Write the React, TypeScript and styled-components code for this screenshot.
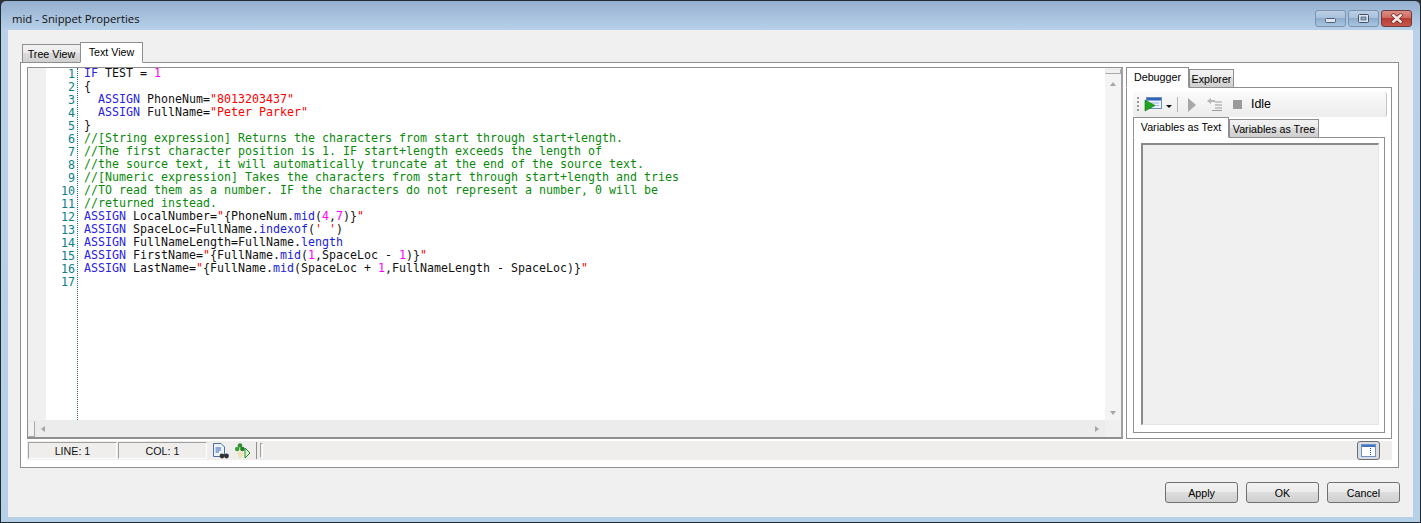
import React from 'react';
import styled, { createGlobalStyle } from 'styled-components';

const GlobalStyle = createGlobalStyle`
  html, body {
    margin: 0;
    padding: 0;
    background: #2b2f33;
    overflow: hidden;
  }
  * {
    box-sizing: border-box;
  }
`;

const WindowFrame = styled.div`
  width: 1421px;
  height: 523px;
  display: flex;
  flex-direction: column;
  border: 1px solid #1f2a33;
  border-radius: 6px 6px 0 0;
  background: linear-gradient(to bottom, #96b0cf 0, #a6bfdb 14px, #b9d2ea 30px, #b6d0e8 100%);
  padding: 0 7px 7px 7px;
  font-family: 'Liberation Sans', Arial, sans-serif;
  font-size: 10.7px;
  color: #000;
`;

const TitleBar = styled.div`
  height: 29px;
  display: flex;
  align-items: flex-start;
  justify-content: space-between;
  flex-shrink: 0;
`;

const Title = styled.div`
  font-family: 'Open Sans', sans-serif;
  font-size: 11.3px;
  line-height: 16px;
  margin: 10px 0 0 4px;
  color: #111;
`;

const CaptionGroup = styled.div`
  display: flex;
  gap: 2px;
  margin: 9px 1px 0 0;
`;

const CaptionButton = styled.div<{ $close?: boolean }>`
  width: 31px;
  height: 17px;
  border: 1px solid ${(p) => (p.$close ? '#6e3a3a' : '#7d93ad')};
  border-radius: 3px;
  display: flex;
  align-items: center;
  justify-content: center;
  background: ${(p) =>
    p.$close
      ? 'linear-gradient(to bottom, #dc8f85 0, #cf6a60 45%, #b93d32 50%, #c8574d 100%)'
      : 'linear-gradient(to bottom, #bcd0e6 0, #a9c1dc 45%, #8faccd 50%, #a9c6e2 100%)'};
`;

const Client = styled.div`
  flex: 1;
  background: #f0f0f0;
  display: flex;
  flex-direction: column;
  padding: 12px 14px 14px 12px;
`;

const TabRow = styled.div<{ $inset: number }>`
  display: flex;
  align-items: flex-end;
  padding-left: ${(p) => p.$inset}px;
  flex-shrink: 0;
  height: 21px;
  position: relative;
  z-index: 1;
  margin-bottom: -1px;
`;

const Tab = styled.div<{ $active?: boolean; $w: number }>`
  width: ${(p) => p.$w}px;
  height: ${(p) => (p.$active ? 21 : 19)}px;
  border: 1px solid #8f8f8f;
  border-bottom: ${(p) => (p.$active ? '1px solid #fff' : '1px solid #8f8f8f')};
  margin-left: ${(p) => (p.$active ? -1 : 0)}px;
  background: ${(p) =>
    p.$active ? '#fff' : 'linear-gradient(to bottom, #f2f2f2 0, #ebebeb 45%, #dcdcdc 50%, #cfcfcf 100%)'};
  display: flex;
  align-items: ${(p) => (p.$active ? 'flex-start' : 'center')};
  justify-content: center;
  padding-top: ${(p) => (p.$active ? 3 : 1)}px;
  line-height: 13px;
  white-space: nowrap;
  position: relative;
  z-index: ${(p) => (p.$active ? 2 : 1)};
`;

const MainPanel = styled.div`
  height: 406px;
  border: 1px solid #8f8f8f;
  background: #fff;
  display: flex;
  flex-direction: column;
  padding: 4px 5px 6px 6px;
`;

const SplitRow = styled.div`
  height: 372px;
  display: flex;
`;

const EditorFrame = styled.div`
  width: 1096px;
  border: 1px solid #8f8f8f;
  border-bottom: 2px solid #8f8f8f;
  border-right: 2px solid #a0a0a0;
  display: grid;
  grid-template-columns: 1fr 16px;
  grid-template-rows: 1fr 17px;
  background: #fff;
`;

const CodeArea = styled.div`
  display: flex;
`;

const Margin = styled.div`
  width: 18px;
  background: #f0f0f0;
  flex-shrink: 0;
`;

const LineNumbers = styled.div`
  width: 32px;
  flex-shrink: 0;
  border-right: 1px dotted #1f6f6f;
  font-family: 'DejaVu Sans Mono', monospace;
  font-size: 11.64px;
  line-height: 13px;
  color: #0a7f86;
  text-align: right;
  padding-right: 2px;
`;

const CodeText = styled.pre`
  margin: -1px 0 0 0;
  padding: 0 0 0 6px;
  font-family: 'DejaVu Sans Mono', monospace;
  font-size: 11.64px;
  line-height: 13px;
  color: #111;
`;

const Keyword = styled.span`
  color: #2a22e6;
`;
const Str = styled.span`
  color: #f00;
`;
const Num = styled.span`
  color: #f0f;
`;
const Comment = styled.span`
  color: #0a8a0a;
`;
const Method = styled.span`
  color: #1a22d8;
`;

const ScrollV = styled.div`
  background: #f4f4f4;
  display: flex;
  flex-direction: column;
  align-items: center;
`;

const ScrollH = styled.div`
  background: #ececec;
  display: flex;
  align-items: center;
  padding-right: 6px;
`;

const ScrollCorner = styled.div`
  background: #f0f0f0;
`;

const SplitGrip = styled.div<{ $vertical?: boolean }>`
  background: #f2f2f2;
  border: 1px solid #a8a8a8;
  border-top-color: #e8e8e8;
  border-left-color: #e8e8e8;
  flex-shrink: 0;
  ${(p) => (p.$vertical ? 'width: 16px; height: 5px; margin-top: 1px;' : 'width: 7px; height: 16px; margin-right: 6px;')}
`;

const Arrow = styled.div<{ $dir: 'up' | 'down' | 'left' | 'right' }>`
  width: 0;
  height: 0;
  border-style: solid;
  ${(p) =>
    p.$dir === 'up'
      ? 'border-width: 0 3.5px 4px 3.5px; border-color: transparent transparent #a6a6a6 transparent; margin-top: 8px;'
      : p.$dir === 'down'
        ? 'border-width: 4px 3.5px 0 3.5px; border-color: #a6a6a6 transparent transparent transparent; margin-top: auto; margin-bottom: 5px;'
        : p.$dir === 'left'
          ? 'border-width: 3.5px 4px 3.5px 0; border-color: transparent #a6a6a6 transparent transparent;'
          : 'border-width: 3.5px 0 3.5px 4px; border-color: transparent transparent transparent #a6a6a6; margin-left: auto;'}
`;

const SidePanel = styled.div`
  width: 266px;
  margin-left: 3px;
  display: flex;
  flex-direction: column;
`;

const SideBody = styled.div`
  flex: 1;
  border: 1px solid #8f8f8f;
  padding: 4px 6px 5px 6px;
  display: flex;
  flex-direction: column;
  background: #fff;
`;

const Toolbar = styled.div`
  height: 25px;
  margin-right: -2px;
  background: linear-gradient(to bottom, #fafafa, #ececec);
  border-radius: 3px;
  display: flex;
  align-items: center;
  padding-left: 4px;
  flex-shrink: 0;
  border-right: 1px solid #c4c4c4;
`;

const Grip = styled.div`
  width: 2px;
  height: 15px;
  margin-right: 5px;
  background: repeating-linear-gradient(to bottom, #9a9a9a 0, #9a9a9a 2px, transparent 2px, transparent 4px);
`;

const ToolSep = styled.div`
  width: 1px;
  height: 15px;
  background: #b5b5b5;
  margin: 0 10px 0 3px;
`;

const ToolIcon = styled.svg<{ $gap?: number }>`
  margin-left: ${(p) => p.$gap ?? 0}px;
  flex-shrink: 0;
`;

const IdleLabel = styled.span`
  margin: 0 0 2px 9px;
  font-size: 12.4px;
`;

const VarPanel = styled.div`
  flex: 1;
  border: 1px solid #8f8f8f;
  background: #fff;
  padding: 5px 5px 7px 7px;
  display: flex;
`;

const VarBox = styled.div`
  flex: 1;
  background: #f0f0f0;
  border: 1px solid #e4e4e4;
  border-top: 2px solid #8a8a8a;
  border-left: 2px solid #8a8a8a;
`;

const StatusBar = styled.div`
  height: 19px;
  margin-top: 2px;
  width: 1365px;
  background: #f0eded;
  display: flex;
  align-items: center;
`;

const StatusCell = styled.div`
  width: 89px;
  height: 17px;
  margin-left: 1px;
  border: 1px solid #a0a0a0;
  border-right-color: #fff;
  border-bottom-color: #fff;
  display: flex;
  align-items: center;
  justify-content: center;
  color: #111;
`;

const StatusIcon = styled.svg`
  width: 17px;
  height: 17px;
  margin-left: 5px;
  flex-shrink: 0;
`;

const StatusSep = styled.div`
  width: 1px;
  height: 17px;
  background: #8f8f8f;
  margin-left: 5px;
`;

const StatusGrip = styled.div`
  width: 3px;
  height: 15px;
  margin-left: 3px;
  border: 1px solid #a0a0a0;
  border-right-color: #fff;
  border-bottom-color: #fff;
`;

const PaneToggle = styled.div`
  margin-left: auto;
  margin-right: 12px;
  width: 23px;
  height: 19px;
  border: 1px solid #6f6f6f;
  border-radius: 3px;
  background: #d8dde3;
  display: flex;
  align-items: center;
  justify-content: center;
`;

const Footer = styled.div`
  display: flex;
  justify-content: flex-end;
  gap: 8px;
  margin-top: 14px;
  margin-right: -1px;
`;

const DialogButton = styled.button`
  width: 73px;
  height: 21px;
  padding: 0;
  border: 1px solid #707070;
  border-radius: 3px;
  background: linear-gradient(to bottom, #f2f2f2 0, #ebebeb 48%, #dddddd 50%, #cfcfcf 100%);
  font-family: 'Liberation Sans', Arial, sans-serif;
  font-size: 10.7px;
  color: #000;
`;

const codeLines: React.ReactNode[] = [
  <><Keyword>IF</Keyword> TEST = <Num>1</Num></>,
  <>{'{'}</>,
  <>{'  '}<Keyword>ASSIGN</Keyword> PhoneNum=<Str>"8013203437"</Str></>,
  <>{'  '}<Keyword>ASSIGN</Keyword> FullName=<Str>"Peter Parker"</Str></>,
  <>{'}'}</>,
  <Comment>//[String expression] Returns the characters from start through start+length.</Comment>,
  <Comment>//The first character position is 1. IF start+length exceeds the length of</Comment>,
  <Comment>//the source text, it will automatically truncate at the end of the source text.</Comment>,
  <Comment>//[Numeric expression] Takes the characters from start through start+length and tries</Comment>,
  <Comment>//TO read them as a number. IF the characters do not represent a number, 0 will be</Comment>,
  <Comment>//returned instead.</Comment>,
  <><Keyword>ASSIGN</Keyword> LocalNumber=<Str>"</Str>{'{'}PhoneNum.<Method>mid</Method>(<Num>4</Num>,<Num>7</Num>){'}'}<Str>"</Str></>,
  <><Keyword>ASSIGN</Keyword> SpaceLoc=FullName.<Method>indexof</Method>(<Str>' '</Str>)</>,
  <><Keyword>ASSIGN</Keyword> FullNameLength=FullName.<Method>length</Method></>,
  <><Keyword>ASSIGN</Keyword> FirstName=<Str>"</Str>{'{'}FullName.<Method>mid</Method>(<Num>1</Num>,SpaceLoc - <Num>1</Num>){'}'}<Str>"</Str></>,
  <><Keyword>ASSIGN</Keyword> LastName=<Str>"</Str>{'{'}FullName.<Method>mid</Method>(SpaceLoc + <Num>1</Num>,FullNameLength - SpaceLoc){'}'}<Str>"</Str></>,
  <></>,
];

const App: React.FC = () => {
  return (
    <>
      <GlobalStyle />
      <WindowFrame>
        <TitleBar>
          <Title>mid - Snippet Properties</Title>
          <CaptionGroup>
            <CaptionButton>
              <svg width="11" height="5" viewBox="0 0 11 5" style={{ marginTop: 3 }}>
                <rect x="0.5" y="0.5" width="10" height="4" rx="1" fill="#dfe6ee" stroke="#4d5f78" />
              </svg>
            </CaptionButton>
            <CaptionButton>
              <svg width="11" height="9" viewBox="0 0 11 9">
                <rect x="0.5" y="0.5" width="10" height="8" rx="1" fill="#dfe6ee" stroke="#3f5068" />
                <rect x="3" y="3" width="5" height="3" fill="#8faccd" stroke="#3f5068" strokeWidth="0.7" />
              </svg>
            </CaptionButton>
            <CaptionButton $close>
              <svg width="14" height="11" viewBox="0 0 14 11">
                <path d="M2 1 L12 10 M12 1 L2 10" stroke="#6b2c28" strokeWidth="4" />
                <path d="M2.5 1.5 L11.5 9.5 M11.5 1.5 L2.5 9.5" stroke="#f4e8e6" strokeWidth="2.4" />
              </svg>
            </CaptionButton>
          </CaptionGroup>
        </TitleBar>
        <Client>
          <TabRow $inset={2}>
            <Tab $w={59}>Tree View</Tab>
            <Tab $active $w={63}>Text View</Tab>
          </TabRow>
          <MainPanel>
            <SplitRow>
              <EditorFrame>
                <CodeArea>
                  <Margin />
                  <LineNumbers>
                    {codeLines.map((_, i) => (
                      <div key={i}>{i + 1}</div>
                    ))}
                  </LineNumbers>
                  <CodeText>
                    {codeLines.map((line, i) => (
                      <div key={i}>{line}</div>
                    ))}
                  </CodeText>
                </CodeArea>
                <ScrollV>
                  <SplitGrip $vertical />
                  <Arrow $dir="up" />
                  <Arrow $dir="down" />
                </ScrollV>
                <ScrollH>
                  <SplitGrip />
                  <Arrow $dir="left" />
                  <Arrow $dir="right" />
                </ScrollH>
                <ScrollCorner />
              </EditorFrame>
              <SidePanel>
                <TabRow $inset={1}>
                  <Tab $active $w={63}>Debugger</Tab>
                  <Tab $w={45}>Explorer</Tab>
                </TabRow>
                <SideBody>
                  <Toolbar>
                    <Grip />
                    <ToolIcon width="30" height="17" viewBox="0 0 30 17">
                      <rect x="2.5" y="1.5" width="15" height="11" fill="#eef3fb" stroke="#6a8fc0" />
                      <rect x="3" y="2" width="14" height="2.5" fill="#2f62b8" />
                      <path d="M6 7 H15 M8 9.5 H15" stroke="#9db6d8" />
                      <path d="M1 4 L1 15 L11 9.5 Z" fill="#1fa51f" stroke="#0c6e0c" strokeWidth="0.6" />
                      <path d="M22 9 L28 9 L25 12 Z" fill="#111" />
                    </ToolIcon>
                    <ToolSep />
                    <ToolIcon width="8" height="14" viewBox="0 0 8 14">
                      <path d="M0 0 L8 7 L0 14 Z" fill="#a8a8a8" />
                    </ToolIcon>
                    <ToolIcon $gap={10} width="16" height="13" viewBox="0 0 16 13">
                      <path d="M9 4 H16 M9 7 H16 M9 10 H16 M6 12.5 H16" stroke="#9a9a9a" />
                      <path d="M1 3 L5 0 V2 H9 V4 H5 V6 Z" fill="#b5b5b5" />
                    </ToolIcon>
                    <ToolIcon $gap={11} width="9" height="9" viewBox="0 0 9 9">
                      <rect width="9" height="9" fill="#9a9a9a" />
                    </ToolIcon>
                    <IdleLabel>Idle</IdleLabel>
                  </Toolbar>
                  <TabRow $inset={1}>
                    <Tab $active $w={96}>Variables as Text</Tab>
                    <Tab $w={90}>Variables as Tree</Tab>
                  </TabRow>
                  <VarPanel>
                    <VarBox />
                  </VarPanel>
                </SideBody>
              </SidePanel>
            </SplitRow>
            <StatusBar>
              <StatusCell>LINE: 1</StatusCell>
              <StatusCell>COL: 1</StatusCell>
              <StatusIcon viewBox="0 0 17 17">
                <path d="M1.5 1.5 H9 L12.5 5 V14.5 H1.5 Z" fill="#eef3fb" stroke="#4a6fa5" />
                <path d="M3.5 6 H9 M3.5 8 H9 M3.5 10 H7" stroke="#2f62b8" />
                <circle cx="10" cy="14" r="2.4" fill="#333" />
                <circle cx="14.5" cy="14" r="2.4" fill="#333" />
              </StatusIcon>
              <StatusIcon viewBox="0 0 17 17">
                <circle cx="6" cy="3.5" r="2.3" fill="#2f8f2f" />
                <circle cx="3.2" cy="7" r="2.3" fill="#3aa03a" />
                <circle cx="8.4" cy="7" r="2.3" fill="#257d25" />
                <path d="M3 11 H9 M4 13 H9 M5 15 H8" stroke="#e6d97a" />
                <path d="M11 6 L16 11 L11 16 Z" fill="#dff2df" stroke="#1f8a1f" />
              </StatusIcon>
              <StatusSep />
              <StatusGrip />
              <PaneToggle>
                <svg width="15" height="13" viewBox="0 0 15 13">
                  <rect x="0.5" y="0.5" width="14" height="12" fill="#fff" stroke="#6f93c4" />
                  <rect x="1" y="1" width="13" height="2" fill="#3f74c4" />
                  <path d="M9.5 4 V12" stroke="#1f4f9f" strokeDasharray="1 1" />
                </svg>
              </PaneToggle>
            </StatusBar>
          </MainPanel>
          <Footer>
            <DialogButton>Apply</DialogButton>
            <DialogButton>OK</DialogButton>
            <DialogButton>Cancel</DialogButton>
          </Footer>
        </Client>
      </WindowFrame>
    </>
  );
};

export default App;
